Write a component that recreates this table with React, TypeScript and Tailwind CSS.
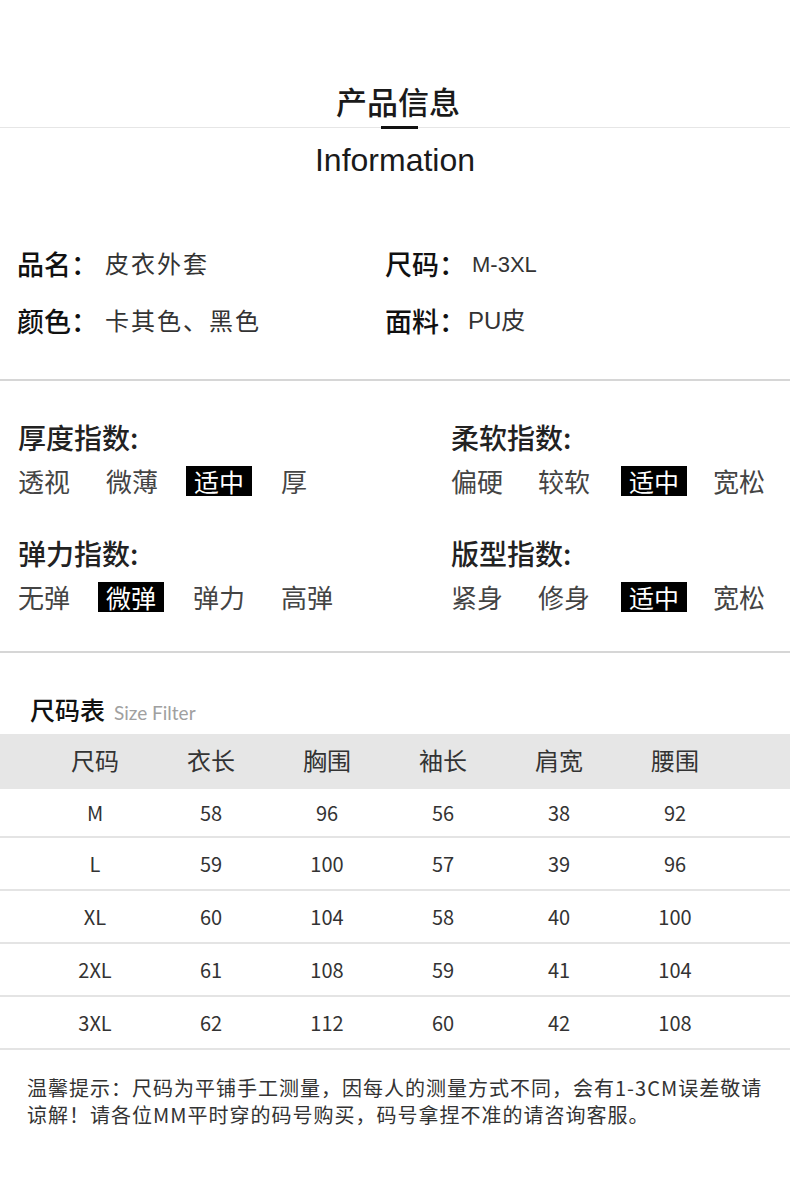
import React from "react";

const cjk = { fontFamily: '"Noto Sans CJK SC", "Noto Sans", sans-serif' };
const latin = { fontFamily: '"Liberation Sans", Arial, sans-serif' };

type Opt = { t: string; on?: boolean };

function OptRow({ cols, items }: { cols: string; items: Opt[] }) {
  return (
    <div className={`grid h-[30px] items-center ${cols}`}>
      {items.map((o, i) =>
        o.on ? (
          <div key={i} className="flex h-[30px] w-[66px] items-center justify-center bg-black text-[25px] leading-none text-white">
            {o.t}
          </div>
        ) : (
          <div key={i} className="text-[26px] leading-none text-[#444]">
            {o.t}
          </div>
        )
      )}
    </div>
  );
}

function IndexGroup({ title, cols, items }: { title: string; cols: string; items: Opt[] }) {
  return (
    <div>
      <div className="flex h-[40px] items-center text-[28px] font-medium leading-none text-[#222]">{title}</div>
      <div className="mt-[9px]">
        <OptRow cols={cols} items={items} />
      </div>
    </div>
  );
}

const headers = ["尺码", "衣长", "胸围", "袖长", "肩宽", "腰围"];
const rows = [
  ["M", "58", "96", "56", "38", "92"],
  ["L", "59", "100", "57", "39", "96"],
  ["XL", "60", "104", "58", "40", "100"],
  ["2XL", "61", "108", "59", "41", "104"],
  ["3XL", "62", "112", "60", "42", "108"],
];

export default function App() {
  return (
    <div className="w-[790px] min-h-[1189px] bg-white" style={cjk}>
      {/* Title */}
      <div className="flex h-[127px] items-end justify-center pb-[11px]">
        <div className="ml-[6px] text-[31px] font-medium leading-none text-[#1a1a1a]">产品信息</div>
      </div>
      <div className="relative h-[1px] bg-[#e6e6e6]">
        <div className="absolute left-[381px] top-[-1px] h-[3px] w-[37px] bg-[#111]" />
      </div>
      <div className="mt-[16px] flex justify-center">
        <div className="text-[32px] leading-none text-[#1a1a1a]" style={latin}>
          Information
        </div>
      </div>

      {/* Basic info */}
      <div className="mt-[67px] grid grid-cols-[368px_1fr] gap-y-[17px] pl-[17px]">
        <div className="flex h-[40px] items-center">
          <span className="text-[27px] font-medium leading-none text-[#111]">品名：</span>
          <span className="ml-[7px] text-[24px] leading-none tracking-[2px] text-[#333]">皮衣外套</span>
        </div>
        <div className="flex h-[40px] items-center">
          <span className="text-[27px] font-medium leading-none text-[#111]">尺码：</span>
          <span className="ml-[6px] mt-[4px] text-[22px] leading-none text-[#333]" style={latin}>
            M-3XL
          </span>
        </div>
        <div className="flex h-[40px] items-center">
          <span className="text-[27px] font-medium leading-none text-[#111]">颜色：</span>
          <span className="ml-[7px] text-[24px] leading-none tracking-[2px] text-[#333]">卡其色、黑色</span>
        </div>
        <div className="flex h-[40px] items-center">
          <span className="text-[27px] font-medium leading-none text-[#111]">面料：</span>
          <span className="ml-[2px] text-[24px] leading-none text-[#333]">
            <span style={latin}>PU</span>皮
          </span>
        </div>
      </div>
      <div className="mt-[39px] h-[2px] bg-[#d6d6d6]" />

      {/* Index section */}
      <div className="mt-[36px] grid grid-cols-[433px_1fr] gap-y-[37px] pl-[18px]">
        <IndexGroup
          title="厚度指数:"
          cols="grid-cols-[88px_80px_95px_auto]"
          items={[{ t: "透视" }, { t: "微薄" }, { t: "适中", on: true }, { t: "厚" }]}
        />
        <IndexGroup
          title="柔软指数:"
          cols="grid-cols-[87px_83px_92px_auto]"
          items={[{ t: "偏硬" }, { t: "较软" }, { t: "适中", on: true }, { t: "宽松" }]}
        />
        <IndexGroup
          title="弹力指数:"
          cols="grid-cols-[80px_95px_88px_auto]"
          items={[{ t: "无弹" }, { t: "微弹", on: true }, { t: "弹力" }, { t: "高弹" }]}
        />
        <IndexGroup
          title="版型指数:"
          cols="grid-cols-[87px_83px_92px_auto]"
          items={[{ t: "紧身" }, { t: "修身" }, { t: "适中", on: true }, { t: "宽松" }]}
        />
      </div>
      <div className="mt-[39px] h-[2px] bg-[#d6d6d6]" />

      {/* Size table */}
      <div className="mt-[39px] flex h-[30px] items-end pl-[30px]">
        <span className="text-[25px] font-medium leading-none text-[#111]">尺码表</span>
        <span
          className="ml-[9px] text-[19px] leading-none text-[#a0a0a0]"
          style={{ fontFamily: 'Lato, "Open Sans", sans-serif' }}
        >
          Size Filter
        </span>
      </div>
      <div className="mt-[12px] grid h-[55px] grid-cols-[repeat(6,116px)] items-center bg-[#e6e6e6] pb-[4px] pl-[37px]">
        {headers.map((h) => (
          <div key={h} className="text-center text-[24px] leading-none text-[#333]">
            {h}
          </div>
        ))}
      </div>
      {rows.map((r, i) => (
        <div
          key={r[0]}
          className={`grid grid-cols-[repeat(6,116px)] items-center border-b-2 border-[#e4e4e4] pl-[37px] ${
            i === 0 ? "h-[49px]" : "h-[53px]"
          }`}
        >
          {r.map((c, j) => (
            <div key={j} className="text-center text-[20px] leading-none text-[#333]">
              {c}
            </div>
          ))}
        </div>
      ))}

      {/* Footer note */}
      <div className="mt-[24px] pl-[27px] text-[20px] leading-[27px] tracking-[1px] text-[#333]">
        温馨提示：尺码为平铺手工测量，因每人的测量方式不同，会有1-3CM误差敬请
        <br />
        谅解！请各位MM平时穿的码号购买，码号拿捏不准的请咨询客服。
      </div>
    </div>
  );
}
